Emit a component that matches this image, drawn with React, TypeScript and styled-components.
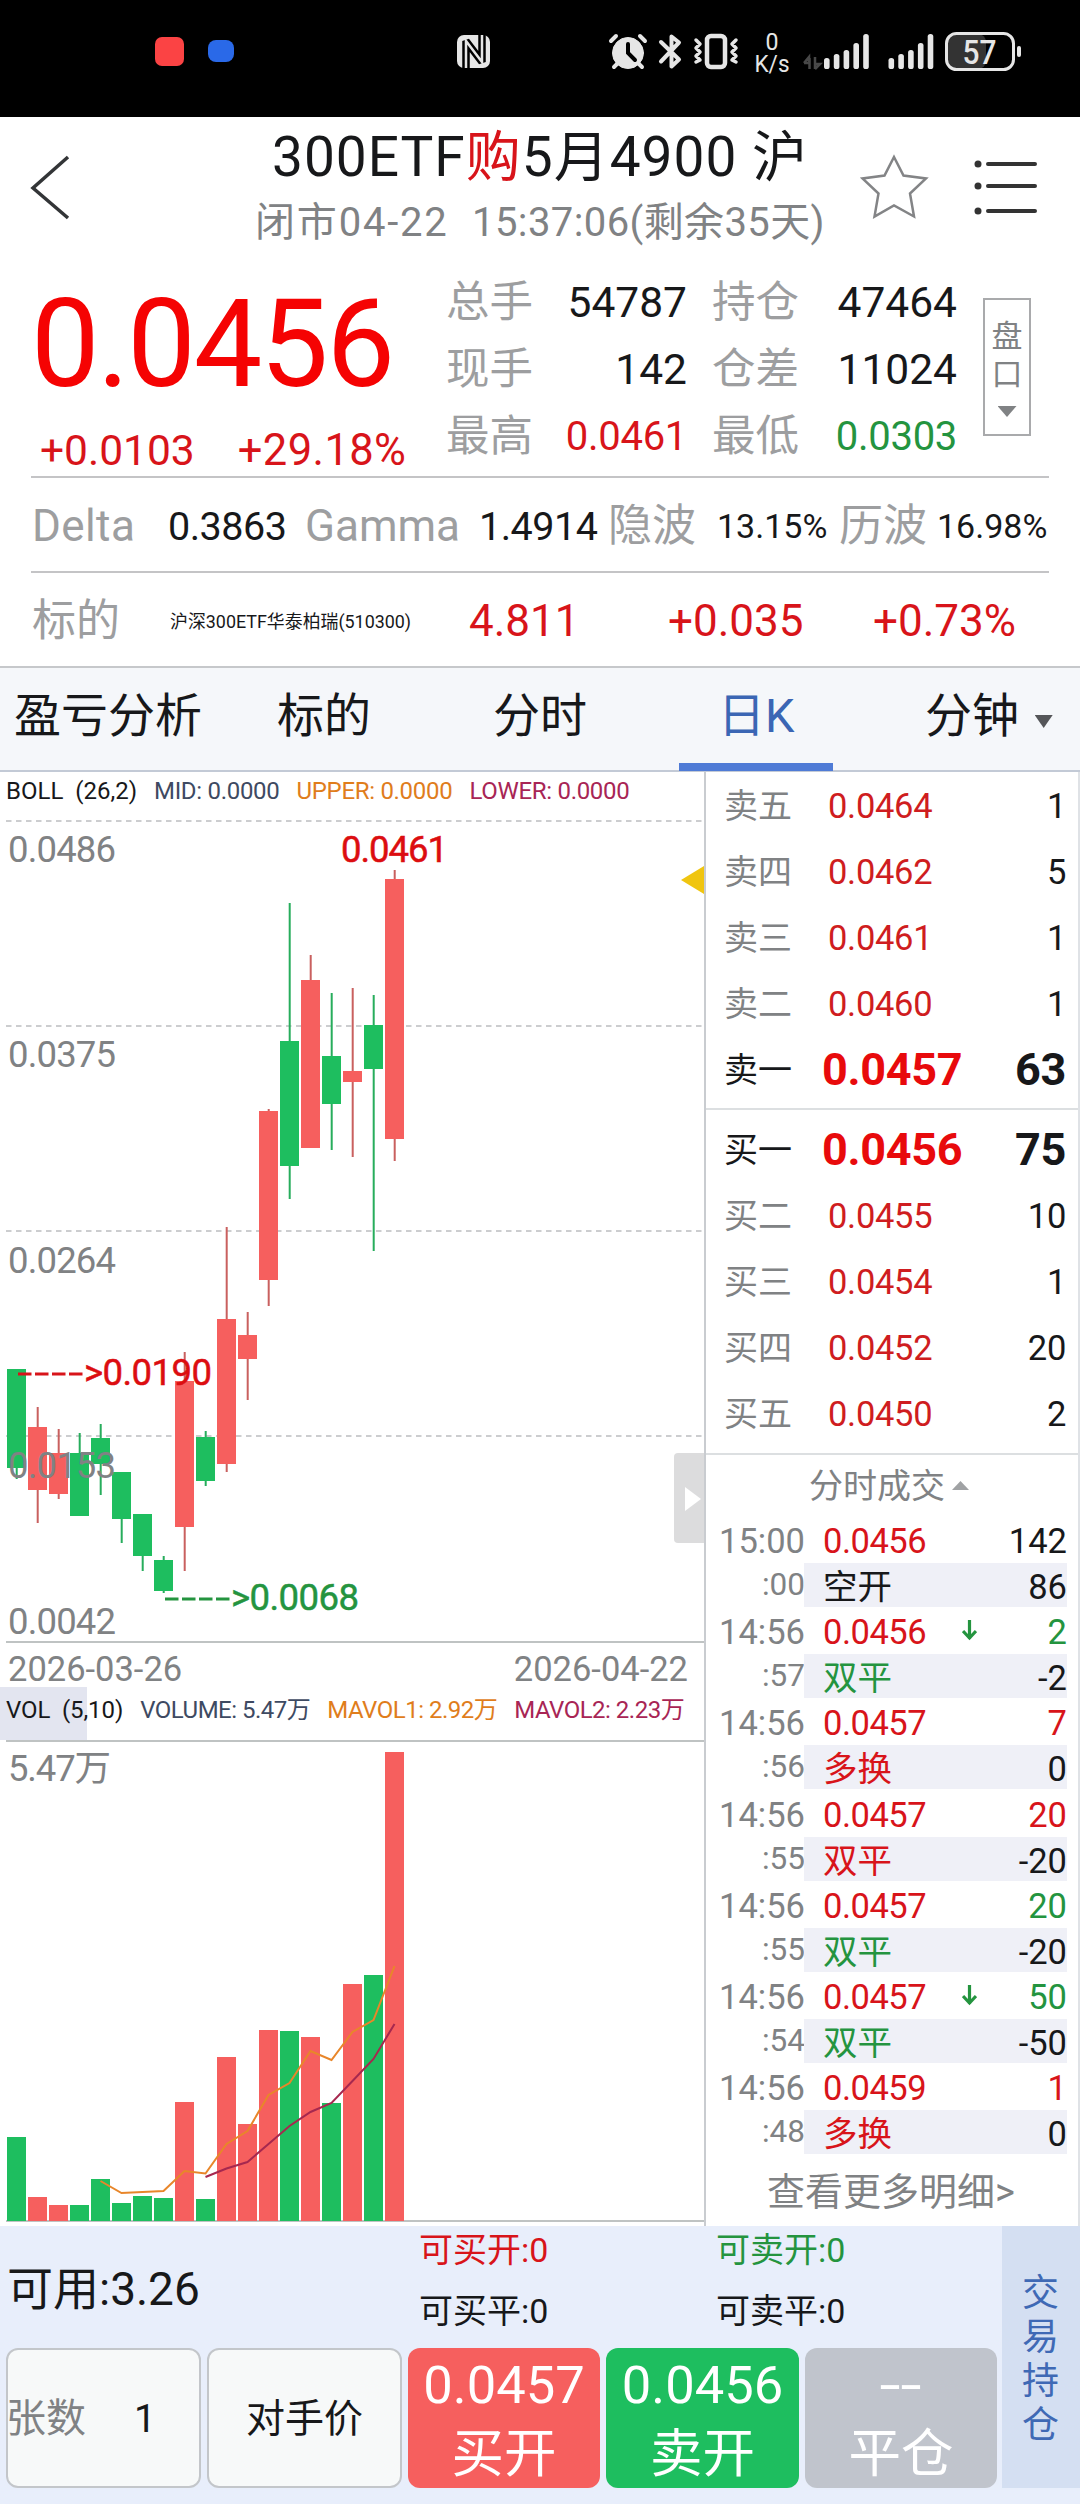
import React from "react";
import styled, { createGlobalStyle, css } from "styled-components";

const RED = "#d8141a";
const GREEN = "#24943f";
const UP = "#f65f5e";
const DOWN = "#1ebe5f";
const INK = "#17181a";
const MUTED = "#808284";
const LABEL = "#9d9ea0";

const Global = createGlobalStyle`
  * { box-sizing: border-box; }
  body { margin: 0; background: #fff; }
`;

const Screen = styled.main`
  width: 1080px;
  height: 2504px;
  display: flex;
  flex-direction: column;
  overflow: hidden;
  background: #fff;
  color: ${INK};
  font-family: Roboto, "Noto Sans CJK SC", sans-serif;
  white-space: pre;
`;

/* ---------- status bar ---------- */

const StatusBar = styled.header`
  height: 117px;
  flex: none;
  background: #000;
`;

const StatusIcons = styled.svg`
  display: block;
  font-family: Roboto, sans-serif;
`;

/* ---------- title ---------- */

const TitleBar = styled.section`
  height: 143px;
  flex: none;
  display: grid;
  grid-template-columns: 200px 1fr 220px;
`;

const TitleText = styled.div`
  text-align: center;
  padding-top: 8px;
  padding-right: 20px;
  margin: 0 -40px 0 0;
  h1 {
    margin: 0;
    font-size: 55px;
    line-height: 64px;
    font-weight: 400;
    letter-spacing: 1px;
  }
  em {
    font-style: normal;
    color: ${RED};
  }
  p {
    margin: 7px 0 0;
    font-size: 40px;
    line-height: 54px;
    letter-spacing: 0.4px;
    color: ${MUTED};
  }
  time {
    letter-spacing: 1.8px;
  }
`;

/* ---------- quote ---------- */

const Quote = styled.section`
  height: 218px;
  flex: none;
  margin: 0 31px;
  display: grid;
  grid-template-columns: 416px 509px 1fr;
  border-bottom: 2px solid #c4c4c6;
`;

const BigPrice = styled.div`
  padding: 15px 0 0 0;
  height: 152px;
  color: #f50303;
  font-size: 122px;
  line-height: 140px;
  letter-spacing: -2.2px;
`;

const Changes = styled.div`
  display: flex;
  gap: 43px;
  padding-left: 9px;
  font-size: 42.5px;
  line-height: 78px;
  color: ${RED};
  span + span {
    font-size: 43.5px;
    letter-spacing: 0.4px;
  }
`;

const Stats = styled.div`
  display: grid;
  grid-template-columns: 88px 153px 25px 90px 155px;
  grid-auto-rows: 67px;
  align-content: start;
  padding-top: 9px;
  margin-left: -1px;
  font-size: 43.5px;
  line-height: 67px;
`;

const StatLabel = styled.span`
  color: ${LABEL};
`;

const StatValue = styled.span<{ $c?: string }>`
  color: ${(p) => p.$c || INK};
  font-size: ${(p) => (p.$c ? 40 : 42.5)}px;
  letter-spacing: ${(p) => (p.$c ? -0.3 : 0)}px;
  text-align: right;
`;

const DepthToggle = styled.button`
  width: 48px;
  height: 138px;
  margin: 38px 0 0 27px;
  padding: 18px 0 0;
  border: 2px solid #a9aaac;
  background: none;
  color: ${MUTED};
  font: 31px/38px Roboto, "Noto Sans CJK SC", sans-serif;
  display: flex;
  flex-direction: column;
  align-items: center;
`;

const Triangle = styled.i<{ $w: number; $h: number; $c: string; $up?: boolean; $m?: string }>`
  display: inline-block;
  width: ${(p) => p.$w}px;
  height: ${(p) => p.$h}px;
  margin: ${(p) => p.$m || 0};
  background: ${(p) => p.$c};
  clip-path: ${(p) => (p.$up ? "polygon(50% 0, 100% 100%, 0 100%)" : "polygon(0 0, 100% 0, 50% 100%)")};
`;

const Strip = styled.section`
  height: 95px;
  flex: none;
  margin: 0 31px;
  padding-left: 1px;
  display: flex;
  line-height: 97px;
  font-size: 44px;
  border-bottom: 2px solid #c4c4c6;
`;

const UnderlyingStrip = styled(Strip)`
  margin: 0;
  padding-left: 32px;
  border-color: #c6c8cb;
`;

const Cell = styled.span<{ $w: number; $c?: string; $s?: number; $ls?: number }>`
  flex: none;
  width: ${(p) => p.$w}px;
  color: ${(p) => p.$c || INK};
  ${(p) => p.$s && css`font-size: ${p.$s}px;`}
  ${(p) => p.$ls && css`letter-spacing: ${p.$ls}px;`}
`;

/* ---------- tabs ---------- */

const Tabs = styled.nav`
  height: 104px;
  flex: none;
  display: flex;
  background: #f5f7fa;
  border-bottom: 2px solid #c3cad6;
  font-size: 47px;
  line-height: 96px;
`;

const Tab = styled.a<{ $w: number; $pad: number; $active?: boolean }>`
  width: ${(p) => p.$w}px;
  height: 103px;
  flex: none;
  padding-left: ${(p) => p.$pad}px;
  color: ${(p) => (p.$active ? "#3b66b4" : INK)};
  border-bottom: 8px solid ${(p) => (p.$active ? "#4f7bd6" : "transparent")};
`;

/* ---------- main ---------- */

const Main = styled.section`
  flex: none;
  height: 1454px;
  display: grid;
  grid-template-columns: 704px 376px;
`;

const Charts = styled.div`
  display: flex;
  flex-direction: column;
`;

const Legend = styled.div<{ $h: number; $lh: number; $gap: number; $ls: number }>`
  height: ${(p) => p.$h}px;
  line-height: ${(p) => p.$lh}px;
  padding-left: 6px;
  display: flex;
  gap: ${(p) => p.$gap}px;
  font-size: 24px;
  letter-spacing: ${(p) => p.$ls}px;
`;

const VolLegend = styled(Legend)`
  background: linear-gradient(#e3e5f0, #e3e5f0) no-repeat 0 0 / 87px 100%;
`;

const Ink = styled.span<{ $c: string }>`
  color: ${(p) => p.$c};
`;

const Params = styled.span<{ $ls?: number }>`
  letter-spacing: ${(p) => p.$ls ?? 0.1}px;
`;

const ChartSvg = styled.svg`
  display: block;
  flex: none;
  font-family: Roboto, "Noto Sans CJK SC", sans-serif;
`;

const Dates = styled.div`
  height: 44px;
  padding: 0 16px 0 8px;
  display: flex;
  justify-content: space-between;
  font-size: 34.5px;
  line-height: 53px;
  color: ${MUTED};
`;

const Book = styled.aside`
  border-left: 2px solid #c9ccd0;
  border-right: 2px solid #dfe2e6;
  border-bottom: 2px solid #dfe2e6;
`;

const Side = styled.div<{ $top: number; $bottom: number }>`
  padding: ${(p) => p.$top}px 12px ${(p) => p.$bottom}px 18px;
  border-bottom: 2px solid #dcdfe1;
`;

const Level = styled.div<{ $best?: boolean }>`
  height: 66px;
  line-height: 66px;
  display: grid;
  grid-template-columns: 98px 1fr auto;
  font-size: 34px;
  color: ${(p) => (p.$best ? INK : MUTED)};
`;

const Price = styled.b<{ $best?: boolean }>`
  color: ${(p) => (p.$best ? "#e80a0c" : "#cf1d20")};
  font-weight: ${(p) => (p.$best ? 700 : 400)};
  font-size: ${(p) => (p.$best ? 45 : 34.5)}px;
  letter-spacing: -0.3px;
  padding-left: ${(p) => (p.$best ? 0 : 6)}px;
`;

const Qty = styled(Price)`
  color: ${INK};
`;

const TicksTitle = styled.div`
  height: 61px;
  line-height: 62px;
  padding-left: 103px;
  font-size: 34px;
  color: ${MUTED};
  display: flex;
  align-items: center;
  gap: 7px;
`;

const Tick = styled.div`
  height: 91.2px;
  padding-right: 11px;
  display: grid;
  grid-template-columns: 98px 1fr;
  grid-template-rows: 47px 44.2px;
  font-size: 34.5px;
  line-height: 51px;
`;

const Time = styled.span<{ $small?: boolean }>`
  text-align: right;
  color: ${MUTED};
  font-size: ${(p) => (p.$small ? 31.5 : 34.5)}px;
  line-height: ${(p) => (p.$small ? 44 : 51)}px;
  margin-right: -1px;
`;

const TickRow = styled.div<{ $shade?: boolean }>`
  display: flex;
  line-height: ${(p) => (p.$shade ? 48 : 51)}px;
  height: ${(p) => (p.$shade ? 44 : 47)}px;
  padding-left: 19px;
  ${(p) => p.$shade && css`background: #eff0f7;`}
`;

const TickQty = styled.span<{ $c: string }>`
  margin-left: auto;
  color: ${(p) => p.$c};
`;

const TickPrice = styled(Ink)`
  letter-spacing: -0.5px;
`;

const DownArrow = styled.svg`
  margin: 12px 0 0 36px;
`;

const More = styled.div`
  padding: 0 0 0 61px;
  font-size: 38px;
  line-height: 76px;
  color: ${MUTED};
`;

/* ---------- footer ---------- */

const Footer = styled.footer`
  flex: 1;
  display: grid;
  grid-template-columns: 1002px 78px;
  grid-template-rows: 262px;
  background: #e8eefb;
`;

const Funds = styled.div`
  height: 122px;
  display: grid;
  grid-template-columns: 412px 297px 1fr;
  grid-template-rows: 50px 72px;
  padding-left: 7px;
  font-size: 34px;
`;

const Available = styled.div`
  grid-row: span 2;
  font-size: 46px;
  line-height: 127px;
`;

const Limit = styled.span<{ $c?: string; $lh: number }>`
  color: ${(p) => p.$c || INK};
  line-height: ${(p) => p.$lh}px;
`;

const Buttons = styled.div`
  display: grid;
  grid-template-columns: 195px 195px 192px 193px 192px;
  grid-template-rows: 140px;
  gap: 6px;
  padding-left: 6px;
`;

const Field = styled.div<{ $center?: boolean }>`
  border: 2px solid #c3c6ca;
  border-radius: 12px;
  background: #f7f9f9;
  font-size: 39px;
  line-height: 138px;
  display: flex;
  gap: 48px;
  justify-content: ${(p) => (p.$center ? "center" : "flex-start")};
`;

const FieldLabel = styled.span`
  margin-left: -2px;
  font-size: 40px;
  color: ${MUTED};
`;

const Order = styled.button<{ $bg: string }>`
  border: 0;
  padding: 3px 0 0;
  border-radius: 12px;
  background: ${(p) => p.$bg};
  color: #fff;
  font: 52.5px/69px Roboto, "Noto Sans CJK SC", sans-serif;
  display: flex;
  flex-direction: column;
  align-items: center;
`;

const NoPrice = styled.span`
  transform: scaleX(1.45);
`;

const Positions = styled.div`
  background: #d4dff2;
  color: #3f69b5;
  font-size: 37px;
  line-height: 44px;
  padding: 46px 20px 0;
  white-space: normal;
  word-break: break-all;
`;

/* ---------- data ---------- */

type Candle = { up: boolean; open: number; close: number; high: number; low: number; vol: number };
const c = (up: number, open: number, close: number, high: number, low: number, vol: number): Candle => ({
  up: !!up, open, close, high, low, vol,
});

const candles: Candle[] = [
  c(0, 1369, 1468, 1369, 1479, 2137),
  c(1, 1427, 1490, 1407, 1523, 2197),
  c(1, 1453, 1494, 1429, 1499, 2205),
  c(0, 1453, 1516, 1433, 1516, 2205),
  c(0, 1438, 1464, 1424, 1495, 2179),
  c(0, 1472, 1519, 1472, 1543, 2203),
  c(0, 1514, 1556, 1514, 1571, 2196),
  c(0, 1560, 1591, 1556, 1593, 2198),
  c(1, 1381, 1527, 1352, 1571, 2102),
  c(0, 1437, 1481, 1431, 1486, 2199),
  c(1, 1319, 1464, 1227, 1472, 2057),
  c(1, 1335, 1359, 1312, 1400, 2124),
  c(1, 1111, 1280, 1109, 1306, 2030),
  c(0, 1041, 1166, 903, 1199, 2031),
  c(1, 980, 1148, 955, 1148, 2037),
  c(0, 1056, 1104, 993, 1150, 2103),
  c(1, 1071, 1082, 988, 1157, 1984),
  c(0, 1025, 1069, 995, 1251, 1975),
  c(1, 879, 1139, 870, 1161, 1752),
];

const ma1 = [2181, 2193, 2192, 2191, 2171, 2173.5, 2144, 2131, 2095, 2083, 2051, 2060, 2032, 2020, 1966];
const ma2 = [2177, 2168.5, 2162, 2144, 2126, 2112, 2103, 2081, 2059, 2024];
const line = (ys: number[], from: number) => ys.map((y, i) => `${16.5 + 21 * (i + from)},${y}`).join(" ");

const axis = [
  ["0.0486", 862],
  ["0.0375", 1067],
  ["0.0264", 1273],
  ["0.0153", 1478],
  ["0.0042", 1634],
] as const;

const asks = [["卖五", "0.0464", "1"], ["卖四", "0.0462", "5"], ["卖三", "0.0461", "1"], ["卖二", "0.0460", "1"], ["卖一", "0.0457", "63"]];
const bids = [["买一", "0.0456", "75"], ["买二", "0.0455", "10"], ["买三", "0.0454", "1"], ["买四", "0.0452", "20"], ["买五", "0.0450", "2"]];

const ticks: [string, string, string, string, string, string, string, string, boolean?][] = [
  ["15:00", "0.0456", "142", INK, ":00", "空开", INK, "86"],
  ["14:56", "0.0456", "2", GREEN, ":57", "双平", GREEN, "-2", true],
  ["14:56", "0.0457", "7", RED, ":56", "多换", RED, "0"],
  ["14:56", "0.0457", "20", RED, ":55", "双平", RED, "-20"],
  ["14:56", "0.0457", "20", GREEN, ":55", "双平", GREEN, "-20"],
  ["14:56", "0.0457", "50", GREEN, ":54", "双平", GREEN, "-50", true],
  ["14:56", "0.0459", "1", RED, ":48", "多换", RED, "0"],
];

function Status() {
  const bars = (x: number) =>
    [11, 15, 19, 26, 35].map((h, i) => <rect key={i} x={x + i * 9.8} y={69 - h} width="5.6" height={h} rx="2.6" fill="#e6e6e6" />);
  return (
    <StatusBar>
      <StatusIcons width="1080" height="117">
        <rect x="155" y="37" width="29" height="29" rx="7" fill="#fb4344" />
        <rect x="208" y="40" width="26" height="22" rx="8" fill="#2a69e8" />
        <rect x="457" y="35" width="33" height="33" rx="7" fill="#e6e6e6" />
        <path d="M466 68V41L482 62V35" fill="none" stroke="#000" strokeWidth="7.5" strokeLinejoin="bevel" />
        <path d="M466 68V41L482 62V35" fill="none" stroke="#e6e6e6" strokeWidth="2.5" />
        <g fill="#e6e6e6" stroke="#e6e6e6" strokeLinecap="round">
          <circle cx="628" cy="53" r="15.5" />
          <path d="M617 64L614 67M639 64L642 67M611 41L616 36M645 41L640 36" strokeWidth="4" fill="none" />
        </g>
        <path d="M628 44V53L635 60" stroke="#000" strokeWidth="4" fill="none" strokeLinecap="round" />
        <path d="M661 42L679 59.5L671.5 66.5V36.5L679 42.5L661 61.5" fill="none" stroke="#e6e6e6" strokeWidth="4" strokeLinecap="round" strokeLinejoin="round" />
        <rect x="707" y="36" width="18" height="31" rx="4" fill="none" stroke="#e6e6e6" strokeWidth="4.5" />
        <path d="M696 40L700 44L696 48L700 52L696 56L700 60L696 62M736 40L732 44L736 48L732 52L736 56L732 60L736 62" fill="none" stroke="#e6e6e6" strokeWidth="3.5" strokeLinecap="round" strokeLinejoin="round" />
        <text x="772" y="49.5" fontSize="24.5" fill="#e6e6e6" textAnchor="middle" textLength="13" lengthAdjust="spacingAndGlyphs">0</text>
        <text x="772" y="72" fontSize="24.5" fill="#e6e6e6" textAnchor="middle" textLength="35" lengthAdjust="spacingAndGlyphs">K/s</text>
        <path d="M804 63H809V57L804 63M809.5 58V69M815 57V69V64H820L815 69" fill="none" stroke="#484848" strokeWidth="2.5" />
        {bars(824)}
        {bars(888.5)}
        <rect x="947" y="34" width="39" height="35" rx="8" fill="#333" />
        <rect x="946.5" y="33.5" width="67" height="36" rx="10" fill="none" stroke="#e6e6e6" strokeWidth="3" />
        <rect x="1017" y="46" width="4" height="11" rx="2" fill="#e6e6e6" />
        <text x="979.5" y="64" fontSize="34" fontWeight="500" fill="#e6e6e6" textAnchor="middle" textLength="34" lengthAdjust="spacingAndGlyphs">57</text>
      </StatusIcons>
    </StatusBar>
  );
}

function KChart() {
  return (
    <ChartSvg width="704" height="841" viewBox="0 802 704 841">
      {[821, 1026, 1231, 1436].map((y) => (
        <line key={y} x1="6" x2="702" y1={y} y2={y} stroke="#cccdcf" strokeWidth="2" strokeDasharray="5.5 4.5" />
      ))}
      <line x1="6" x2="704" y1="1642" y2="1642" stroke="#bfc3c3" strokeWidth="2" />
      {candles.map((k, i) => (
        <g key={i} fill={k.up ? UP : DOWN}>
          <rect x={15.7 + 21 * i} y={k.high} width="2" height={k.low - k.high} fill={k.up ? "#c9605f" : "#27ad5c"} />
          <rect x={7 + 21 * i} y={k.open} width="19" height={k.close - k.open} />
        </g>
      ))}
      {axis.map(([t, y]) => (
        <text key={t} x="8" y={y} fontSize="36.5" fill={MUTED} textLength="108">{t}</text>
      ))}
      <text x="341" y="862" fontSize="36.5" fill="#dc0d10" stroke="#dc0d10" strokeWidth="0.5" textLength="107">0.0461</text>
      <path d="M18 1374H84" stroke={RED} strokeWidth="3" strokeDasharray="13.5 3.5" />
      <text x="84" y="1385" fontSize="36.5" fill="#dc0d10" stroke="#dc0d10" strokeWidth="0.5" textLength="128">&gt;0.0190</text>
      <path d="M165 1599H231" stroke={GREEN} strokeWidth="3" strokeDasharray="13.5 3.5" />
      <text x="231" y="1610" fontSize="36.5" fill={GREEN} stroke={GREEN} strokeWidth="0.5" textLength="128">&gt;0.0068</text>
      <path d="M704 866V894L681 880Z" fill="#f0c510" />
      <path d="M704 1453H678Q674 1453 674 1457V1539Q674 1543 678 1543H704Z" fill="#dcdcdd" />
      <path d="M685 1487V1511L701 1499Z" fill="#fff" />
    </ChartSvg>
  );
}

function VolumeChart() {
  return (
    <ChartSvg width="704" height="484" viewBox="0 1740 704 484">
      <line x1="6" x2="704" y1="1741" y2="1741" stroke="#bfc3c3" strokeWidth="2" />
      <line x1="6" x2="704" y1="2221" y2="2221" stroke="#bfc3c3" strokeWidth="2" />
      {candles.map((k, i) => (
        <rect key={i} x={7 + 21 * i} y={k.vol} width="19" height={2221 - k.vol} fill={k.up ? UP : DOWN} />
      ))}
      <polyline points={line(ma1, 4)} fill="none" stroke="#e8862a" strokeWidth="2" />
      <polyline points={line(ma2, 9)} fill="none" stroke="#a6284f" strokeWidth="2" />
      <text x="8" y="1781" fontSize="36.5" fill={MUTED} textLength="103">5.47万</text>
    </ChartSvg>
  );
}

function Levels({ rows, best }: { rows: string[][]; best: number }) {
  return (
    <>
      {rows.map(([name, price, qty], i) => (
        <Level key={name} $best={i === best}>
          <span>{name}</span>
          <Price $best={i === best}>{price}</Price>
          <Qty $best={i === best}>{qty}</Qty>
        </Level>
      ))}
    </>
  );
}

export default function App() {
  return (
    <Screen>
      <Global />
      <Status />
      <TitleBar>
        <svg width="200" height="143">
          <path d="M68 40L33 71L68 101" fill="none" stroke="#333537" strokeWidth="3.5" />
        </svg>
        <TitleText>
          <h1>300ETF<em>购</em>5月4900 沪</h1>
          <p><time>闭市04-22  </time>15:37:06(剩余35天)</p>
        </TitleText>
        <svg width="220" height="143">
          <path d="M34 40L43.5 58.5L66 61.5L50 76.5L54 99.5L34 88.5L14.5 99.5L18.5 76.5L2.5 61.5L24.5 58.5Z" fill="none" stroke="#838486" strokeWidth="2.5" />
          <g stroke="#333" strokeWidth="4" strokeLinecap="round">
            <path d="M128 47H175M128 69H175M128 94H175" />
          </g>
          <g fill="#333">
            <circle cx="118" cy="47" r="3.5" />
            <circle cx="118" cy="69" r="3.5" />
            <circle cx="118" cy="94" r="3.5" />
          </g>
        </svg>
      </TitleBar>
      <Quote>
        <div>
          <BigPrice>0.0456</BigPrice>
          <Changes><span>+0.0103</span><span>+29.18%</span></Changes>
        </div>
        <Stats>
          <StatLabel>总手</StatLabel><StatValue>54787</StatValue><i />
          <StatLabel>持仓</StatLabel><StatValue>47464</StatValue>
          <StatLabel>现手</StatLabel><StatValue>142</StatValue><i />
          <StatLabel>仓差</StatLabel><StatValue>11024</StatValue>
          <StatLabel>最高</StatLabel><StatValue $c={RED}>0.0461</StatValue><i />
          <StatLabel>最低</StatLabel><StatValue $c={GREEN}>0.0303</StatValue>
        </Stats>
        <DepthToggle>
          <span>盘</span>
          <span>口</span>
          <Triangle $w={19} $h={11} $c={MUTED} $m="12px 0 0" />
        </DepthToggle>
      </Quote>
      <Strip>
        <Cell $w={136} $c={LABEL} $ls={0.4}>Delta</Cell>
        <Cell $w={137} $s={39.5} $ls={-0.5}>0.3863</Cell>
        <Cell $w={174} $c={LABEL}>Gamma</Cell>
        <Cell $w={129} $s={39.5} $ls={-0.5}>1.4914</Cell>
        <Cell $w={109} $c={LABEL}>隐波</Cell>
        <Cell $w={122} $s={34}>13.15%</Cell>
        <Cell $w={98} $c={LABEL}>历波</Cell>
        <Cell $w={110} $s={34}>16.98%</Cell>
      </Strip>
      <UnderlyingStrip>
        <Cell $w={138} $c={LABEL}>标的</Cell>
        <Cell $w={299} $s={17.9}>沪深300ETF华泰柏瑞(510300)</Cell>
        <Cell $w={199} $c={RED}>4.811</Cell>
        <Cell $w={205} $c={RED}>+0.035</Cell>
        <Cell $w={160} $c={RED}>+0.73%</Cell>
      </UnderlyingStrip>
      <Tabs>
        <Tab $w={240} $pad={14}>盈亏分析</Tab>
        <Tab $w={220} $pad={37}>标的</Tab>
        <Tab $w={219} $pad={33}>分时</Tab>
        <Tab $w={154} $pad={39} $active>日K</Tab>
        <Tab $w={247} $pad={92}>分钟 <Triangle $w={18} $h={13} $c="#555659" $m="0 0 4px 4px" /></Tab>
      </Tabs>
      <Main>
        <Charts>
          <Legend $h={30} $lh={38} $gap={17} $ls={-0.3}>
            <Params $ls={0}>BOLL  (26,2)</Params>
            <Ink $c="#3e4a62">MID: 0.0000</Ink>
            <Ink $c="#e07d1c">UPPER: 0.0000</Ink>
            <Ink $c="#a82555">LOWER: 0.0000</Ink>
          </Legend>
          <KChart />
          <Dates><span>2026-03-26</span><span>2026-04-22</span></Dates>
          <VolLegend $h={53} $lh={47} $gap={17} $ls={-0.5}>
            <Params $ls={-0.1}>VOL  (5,10)</Params>
            <Ink $c="#3e4a62">VOLUME: 5.47万</Ink>
            <Ink $c="#e07d1c">MAVOL1: 2.92万</Ink>
            <Ink $c="#a82555">MAVOL2: 2.23万</Ink>
          </VolLegend>
          <VolumeChart />
        </Charts>
        <Book>
          <Side $top={1} $bottom={5}><Levels rows={asks} best={4} /></Side>
          <Side $top={7} $bottom={6}><Levels rows={bids} best={0} /></Side>
          <TicksTitle>分时成交<Triangle $w={17} $h={9} $c="#a0a2a4" $up /></TicksTitle>
          {ticks.map(([t, p, q, qc, t2, kind, kc, d, down], i) => (
            <Tick key={i}>
              <Time>{t}</Time>
              <TickRow>
                <TickPrice $c={RED}>{p}</TickPrice>
                {down && (
                  <DownArrow width="15" height="22"><path d="M7.5 1V20M1 12L7.5 19L14 12" fill="none" stroke={GREEN} strokeWidth="3.2" /></DownArrow>
                )}
                <TickQty $c={qc}>{q}</TickQty>
              </TickRow>
              <Time $small>{t2}</Time>
              <TickRow $shade>
                <Ink $c={kc}>{kind}</Ink>
                <TickQty $c={INK}>{d}</TickQty>
              </TickRow>
            </Tick>
          ))}
          <More>查看更多明细&gt;</More>
        </Book>
      </Main>
      <Footer>
        <div>
          <Funds>
            <Available>可用:3.26</Available>
            <Limit $lh={48} $c={RED}>可买开:0</Limit>
            <Limit $lh={48} $c={GREEN}>可卖开:0</Limit>
            <Limit $lh={70}>可买平:0</Limit>
            <Limit $lh={70}>可卖平:0</Limit>
          </Funds>
          <Buttons>
            <Field><FieldLabel>张数</FieldLabel><span>1</span></Field>
            <Field $center>对手价</Field>
            <Order $bg={UP}><span>0.0457</span><span>买开</span></Order>
            <Order $bg={DOWN}><span>0.0456</span><span>卖开</span></Order>
            <Order $bg="#c0c4cc"><NoPrice>--</NoPrice><span>平仓</span></Order>
          </Buttons>
        </div>
        <Positions>交易持仓</Positions>
      </Footer>
    </Screen>
  );
}
